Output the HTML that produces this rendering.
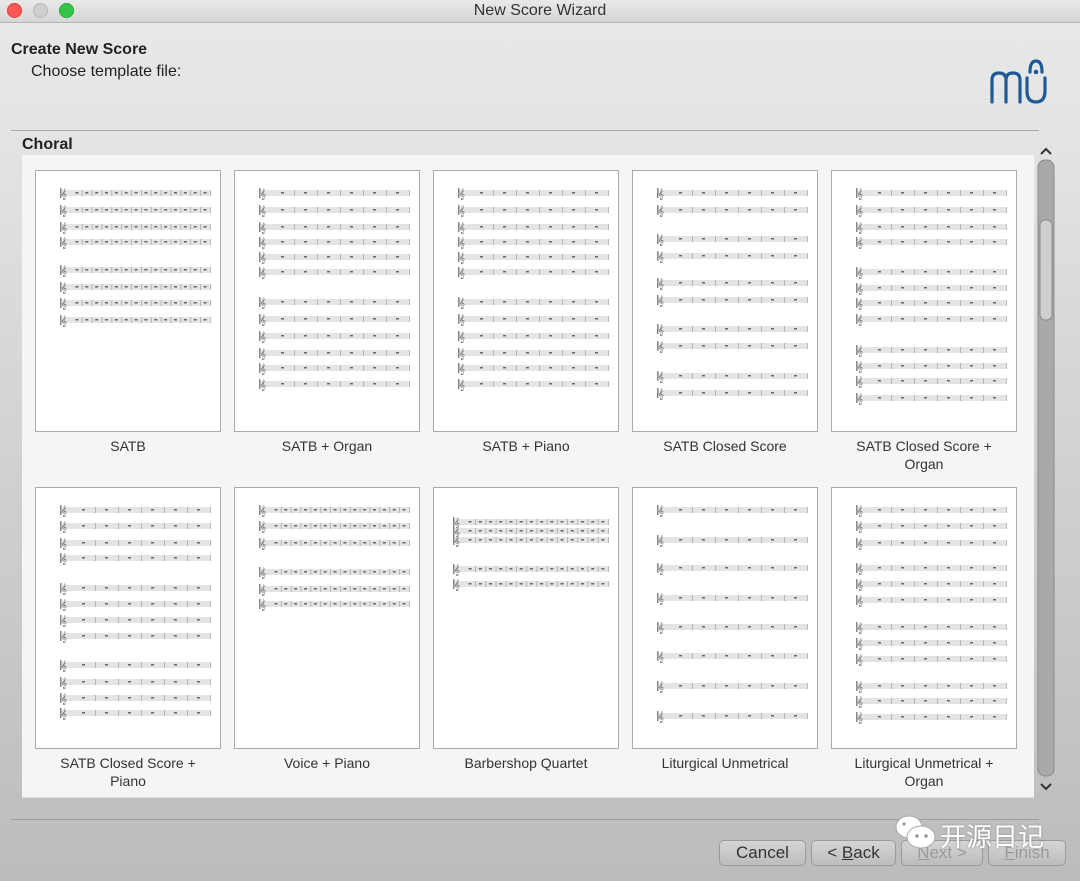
<!DOCTYPE html>
<html><head><meta charset="utf-8"><style>
*{margin:0;padding:0;box-sizing:border-box}
body{width:1080px;height:881px;overflow:hidden;font-family:"Liberation Sans","Noto Sans CJK SC",sans-serif;position:relative;background:linear-gradient(#e8e8e8 23px,#e3e3e3 150px,#cfcfcf 500px,#bcbcbc 881px)}
.tb{position:absolute;left:0;top:0;width:1080px;height:23px;background:linear-gradient(#e9e9e9,#d6d6d6);border-bottom:1px solid #b5b5b5;text-align:center;font-size:16px;line-height:22px;color:#333}
.dot{position:absolute;top:3px;width:15px;height:15px;border-radius:50%}
.abs{position:absolute}
.panel{position:absolute;left:22px;top:155px;width:1012px;height:643px;background:#f5f5f5;border-bottom:1px solid #ddd}
.card{position:absolute;width:186px;height:262px;background:#fff;border:1px solid #aaa}
.lbl{position:absolute;width:200px;text-align:center;font-size:14px;color:#333;line-height:18px}
.btn{position:absolute;top:840px;height:26px;border:1px solid #9a9a9a;border-radius:5px;background:linear-gradient(#d5d5d5,#bdbdbd);font-size:17px;line-height:24px;text-align:center;color:#333}
</style></head><body>
<div class="tb">New Score Wizard</div>
<div class="dot" style="left:7px;background:#fc5753;border:1px solid #df3d39"></div>
<div class="dot" style="left:33px;background:#cfcfcf;border:1px solid #b8b8b8"></div>
<div class="dot" style="left:59px;background:#33c748;border:1px solid #27a93a"></div>
<div class="abs" style="left:11px;top:41px;font-size:16px;font-weight:bold;color:#222">Create New Score</div>
<div class="abs" style="left:31px;top:63px;font-size:16px;color:#222">Choose template file:</div>
<svg class="abs" style="left:988px;top:56px" width="60" height="50" viewBox="0 0 60 50"><g fill="none" stroke="#1f5a97" stroke-width="3.2" stroke-linecap="round"><path d="M4 46V24q0-7 7-7t7 7v22M18 24q0-7 7-7t7 7v22"/><path d="M39 22v13q0 11 9 11t9-11V22"/><path d="M42 16q0-11 6-11t6 11"/></g><circle cx="48" cy="16" r="2.3" fill="#1f5a97"/></svg>
<div class="abs" style="left:11px;top:130px;width:1028px;height:1px;background:#a8a8a8"></div>
<div class="abs" style="left:22px;top:136px;font-size:16px;font-weight:bold;color:#222">Choral</div>
<div class="panel"></div>
<svg class="abs" style="left:1037px;top:140px" width="20" height="660"><path d="M4 14l5-5 5 5" fill="none" stroke="#333" stroke-width="2"/><rect x="1" y="20" width="16" height="616" rx="7" fill="#a9a9a9" stroke="#8a8a8a"/><rect x="3" y="80" width="12" height="100" rx="5" fill="#cfcfcf" stroke="#888"/><path d="M4 644l5 5 5-5" fill="none" stroke="#333" stroke-width="2"/></svg>
<div id="cards"></div>
<div class="abs" style="left:11px;top:819px;width:1028px;height:1px;background:#a0a0a0"></div>
<div class="btn" style="left:719px;width:87px">Cancel</div>
<div class="btn" style="left:811px;width:85px">&lt; <u>B</u>ack</div>
<div class="btn" style="left:901px;width:82px;color:#9a9a9a"><u>N</u>ext &gt;</div>
<div class="btn" style="left:988px;width:78px;color:#9a9a9a"><u>F</u>inish</div>
<svg class="abs" style="left:893px;top:813px" width="46" height="40"><ellipse cx="16" cy="14" rx="13" ry="11" fill="#fff" stroke="#aaa"/><ellipse cx="28" cy="24" rx="14" ry="11" fill="#fff" stroke="#aaa"/><circle cx="24" cy="23" r="1.8" fill="#999"/><circle cx="33" cy="23" r="1.8" fill="#999"/><circle cx="11" cy="11" r="1.6" fill="#999"/></svg>
<div class="abs" style="left:940px;top:817px;font-size:26px;color:#fff;text-shadow:0 0 2px #888">开源日记</div>
<script>
var cols=[35,234,433,632,831],rows=[170,487];
var T=[
["SATB",[23,40,57,72,100,117,133,150],14,1],
["SATB + Organ",[23,40,57,72,87,102,132,149,166,183,198,214],6,0],
["SATB + Piano",[23,40,57,72,87,102,132,149,166,183,198,214],6,0],
["SATB Closed Score",[23,40,69,86,113,130,159,176,206,223],6,0],
["SATB Closed Score +<br>Organ",[23,40,57,72,102,118,133,149,180,196,211,228],6,0],
["SATB Closed Score +<br>Piano",[23,39,56,71,101,117,133,149,178,195,211,226],6,0],
["Voice + Piano",[23,39,56,85,102,117],14,1],
["Barbershop Quartet",[35,44,53,82,97],14,2],
["Liturgical Unmetrical",[23,53,81,111,140,169,199,229],6,0],
["Liturgical Unmetrical +<br>Organ",[23,39,56,81,97,113,140,156,172,199,214,230],6,0]];
var h="";
T.forEach(function(t,i){var x=cols[i%5],y=rows[Math.floor(i/5)];
var s='<svg width="186" height="262" style="position:absolute;left:-1px;top:-1px">';
var x0=t[3]==2?20:25,x1=175;
t[1].forEach(function(sy){s+='<rect x="'+x0+'" y="'+(sy-3)+'" width="'+(x1-x0)+'" height="6" fill="#e4e4e4"/>';
s+='<rect x="'+x0+'" y="'+(sy-5)+'" width="1.5" height="10" fill="#888"/><text x="'+(x0+1)+'" y="'+(sy+4)+'" font-size="10" fill="#555">&#x1D11E;</text>';
var n=t[2];for(var k=0;k<n;k++){var mx=x0+12+(x1-x0-12)*(k+0.5)/n;s+='<rect x="'+(mx-1.5)+'" y="'+(sy-1)+'" width="3" height="1.5" fill="#666"/>';s+='<rect x="'+(x0+12+(x1-x0-12)*(k+1)/n)+'" y="'+(sy-3)+'" width="0.8" height="6" fill="#aaa"/>';}});
s+='</svg>';
h+='<div class="card" style="left:'+x+'px;top:'+y+'px">'+s+'</div><div class="lbl" style="left:'+(x-7)+'px;top:'+(y+267)+'px">'+t[0]+'</div>';});
document.getElementById("cards").innerHTML=h;
</script>
</body></html>
